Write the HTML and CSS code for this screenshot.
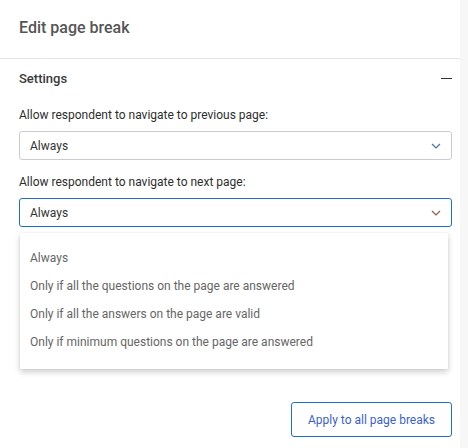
FILE: index.html
```html
<!DOCTYPE html>
<html>
<head>
<meta charset="utf-8">
<link rel="stylesheet" href="styles.css">
</head>
<body>
<div class="shell">
  <div class="panel">
    <header class="head">Edit page break</header>
    <section class="section">
      <div class="section-title">
        <span>Settings</span>
        <span class="minus"></span>
      </div>
      <label class="label">Allow respondent to navigate to previous page:</label>
      <div class="select">
        <span>Always</span>
        <svg class="chev" width="10" height="6" viewBox="0 0 10 6"><path d="M1 1l4 4 4-4" fill="none" stroke="#4a6fa5" stroke-width="1.2"/></svg>
      </div>
      <label class="label">Allow respondent to navigate to next page:</label>
      <div class="dropwrap">
        <div class="select active">
          <span>Always</span>
          <svg class="chev" width="10" height="6" viewBox="0 0 10 6"><path d="M1 1l4 4 4-4" fill="none" stroke="#8a5a4a" stroke-width="1.2"/></svg>
        </div>
        <ul class="menu">
          <li>Always</li>
          <li>Only if all the questions on the page are answered</li>
          <li>Only if all the answers on the page are valid</li>
          <li>Only if minimum questions on the page are answered</li>
        </ul>
      </div>
    </section>
    <footer class="foot">
      <button class="btn">Apply to all page breaks</button>
    </footer>
  </div>
  <div class="gutter"></div>
</div>
</body>
</html>
```
FILE: styles.css
```css
* { box-sizing: border-box; }
html, body { margin: 0; padding: 0; }
body {
  font-family: Roboto, "Liberation Sans", sans-serif;
  background: #fff;
  width: 468px;
  height: 448px;
  overflow: hidden;
}
.shell { display: flex; height: 448px; }
.panel { width: 460px; display: flex; flex-direction: column; }
.gutter { width: 8px; background: #f7f7f8; }
.head {
  height: 59px;
  padding: 18px 19px 0;
  font-size: 16px;
  font-weight: 500;
  color: #555;
  border-bottom: 1px solid #e3e3e3;
}
.section { padding: 0 8px 0 19px; display: flex; flex-direction: column; }
.section-title {
  display: flex;
  justify-content: space-between;
  align-items: center;
  height: 38px;
  padding-top: 1px;
  font-size: 13px;
  font-weight: 500;
  color: #3a3a3a;
}
.minus { width: 11px; height: 1.5px; background: #333; }
.label {
  font-size: 12px;
  color: #2e2e2e;
  margin-top: 10px;
  height: 17px;
  line-height: 17px;
}
.select {
  margin-top: 7px;
  height: 29px;
  border: 1px solid #c9cdd3;
  border-radius: 3px;
  display: flex;
  align-items: center;
  justify-content: space-between;
  padding: 0 10px;
  font-size: 12px;
  color: #333;
}
.select.active { border-color: #1f6fd1; }
.select + .label { margin-top: 14px; }
.chev { display: block; }
.dropwrap { position: relative; }
.menu {
  position: absolute;
  left: 1px;
  right: 4px;
  top: 42px;
  margin: 0;
  padding: 11px 0 13px;
  list-style: none;
  background: #fff;
  box-shadow: 0 3px 6px rgba(0,0,0,0.2), 0 0 1px rgba(0,0,0,0.12);
  z-index: 2;
}
.menu li {
  height: 28px;
  line-height: 28px;
  padding-left: 10px;
  font-size: 12px;
  color: #666;
}
.foot {
  margin-top: auto;
  padding: 0 8px 11px 0;
  display: flex;
  justify-content: flex-end;
}
.btn {
  width: 161px;
  height: 35px;
  border: 1px solid #1f6fd1;
  border-radius: 3px;
  background: #fff;
  color: #3c5fcf;
  font-family: Roboto, "Liberation Sans", sans-serif;
  font-size: 12px;
}
```
